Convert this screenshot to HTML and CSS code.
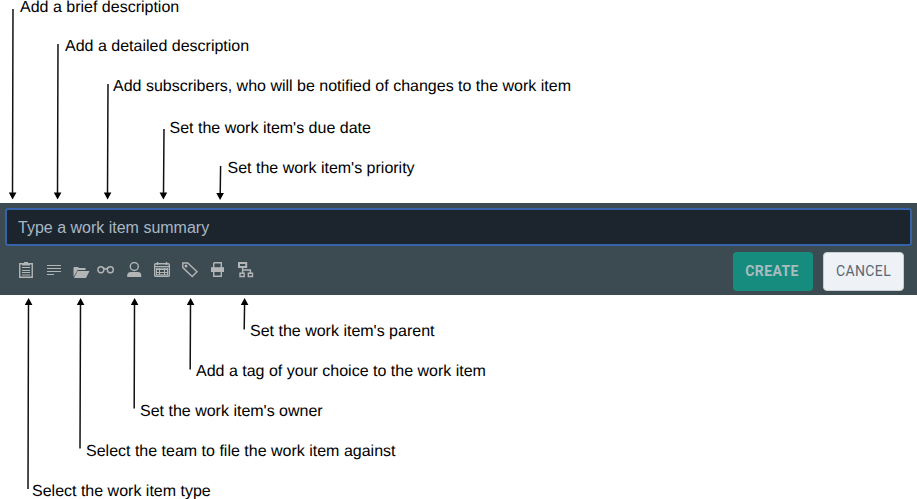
FILE: index.html
```
<!DOCTYPE html>
<html lang="en">
<head>
<meta charset="utf-8">
<title>Work item quick create</title>
<link rel="stylesheet" href="styles.css">
</head>
<body>
<svg class="notes" width="917" height="203" viewBox="0 0 917 203">
  <path class="shaft" d="M13 9L12.500 194M58 44L57.500 194M108 84L107.500 194M164 129L163.500 194M220.600 166L220.200 194"/>
  <path d="M8.800 192.500h7.600L12.600 199.500zM53.800 192.500h7.600L57.600 199.500zM103.800 192.500h7.600L107.600 199.500zM159.600 192.500h7.600L163.400 199.500zM216.300 193h7.600L220.100 200z"/>
  <text x="20" y="12">Add a brief description</text>
  <text x="65" y="51">Add a detailed description</text>
  <text x="113" y="91">Add subscribers, who will be notified of changes to the work item</text>
  <text x="169.500" y="133">Set the work item's due date</text>
  <text x="227.500" y="173">Set the work item's priority</text>
</svg>
<form class="bar">
  <input class="summary" type="text" placeholder="Type a work item summary" aria-label="Summary">
  <div class="tools">
    <div class="icons">
      <svg class="icon" viewBox="0 0 28 16"><path class="line" d="M7.750 1.750h12.500v13.500H7.750z"/><path d="M10 1h2V0h4v1h2v2.500h-8z"/><path class="thin" d="M10 5.500h8M10 8.500h8M10 10.500h8M10 13h8"/></svg>
      <svg class="icon" viewBox="0 0 28 16"><path class="thin" d="M7 3.500h14M7 6.500h14M7 9.500h14M7 12.500h7"/></svg>
      <svg class="icon" viewBox="0 0 28 16"><path d="M5.500 6L6 5h4l1 1h6.500v2H9.500L6 14.500h-.5zM9.500 9h12L18 16H6z"/></svg>
      <svg class="icon" viewBox="0 0 28 16"><circle class="line" cx="4.900" cy="7.700" r="3"/><circle class="line" cx="14.300" cy="7.700" r="3"/><path class="line" d="M6.500 5.500L9.600 7.200L12.500 5.500"/></svg>
      <svg class="icon" viewBox="0 0 28 16"><circle class="line" cx="10.300" cy="4.500" r="4"/><path d="M3.200 15v-1.500c0-2 1.200-3.500 3.500-3.500h7.400c2 0 3.200 1.500 3.200 3.500V15z"/></svg>
      <svg class="icon" viewBox="0 0 28 16"><rect class="line" x="2.700" y="1.700" width="14.600" height="12.600" rx="1"/><path class="thin" d="M3 4.500h14M4 7.500h12M4 10.500h12M7.500 6v7M12.500 6v7M4.500 6v7M15.500 6v7M4 6.200h12M4 12.800h12"/><path class="line" d="M5.500 0v3M14.500 0v3"/></svg>
      <svg class="icon" viewBox="0 0 28 16"><path class="line" d="M2.800 1h5L17 9.700 12.200 14.500 2.800 5.600z"/><circle cx="6" cy="3.900" r="1.500"/></svg>
      <svg class="icon" viewBox="0 0 28 16"><path class="line" d="M5.700.7h7.600V6M5.700 6V.7M5.700 9v5.300h7.600V9"/><path d="M3 5.200h13v4.800H3z"/></svg>
      <svg class="icon" viewBox="0 0 28 16"><path class="line strong" d="M3 1h7.200v4H3z"/><path class="line" d="M6.600 5v3h7.800v3M6.600 8v3M4 11.300h4.200v3.200H4zM12.300 11.300h4.200v3.200h-4.200z"/></svg>
    </div>
    <button class="button create" type="button">CREATE</button>
    <button class="button cancel" type="button">CANCEL</button>
  </div>
</form>
<svg class="notes" width="917" height="204" viewBox="0 295 917 204">
  <path class="shaft" d="M28.500 303L28 489M80.500 303L80 448.500M134.500 303L134.200 408.500M190.500 303L190.200 369.500M244.600 303L244.200 329.500"/>
  <path d="M24.800 305h7.600L28.600 298zM76.800 305h7.600L80.600 298zM130.800 305h7.600L134.600 298zM186.800 305h7.600L190.600 298zM240.800 305h7.600L244.600 298z"/>
  <text x="250" y="336">Set the work item's parent</text>
  <text x="196" y="376">Add a tag of your choice to the work item</text>
  <text x="140" y="416">Set the work item's owner</text>
  <text x="86" y="456">Select the team to file the work item against</text>
  <text x="32" y="496">Select the work item type</text>
</svg>
</body>
</html>
```
FILE: styles.css
```
body {
  margin: 0;
  background: #fff;
  font-family: "Liberation Sans", Arial, sans-serif;
  overflow: hidden;
}

.notes {
  display: block;
  fill: #000;
}

.notes text {
  font-size: 16px;
  text-rendering: geometricPrecision;
}

.shaft {
  fill: none;
  stroke: #111;
  stroke-width: 1.5;
}

.bar {
  box-sizing: border-box;
  height: 92px;
  padding: 5px 5px 0;
  background: #3c4a52;
}

.summary {
  display: block;
  box-sizing: border-box;
  width: 907px;
  height: 38px;
  margin: 0;
  padding: 2px 11px 0;
  border: 2px solid #3662a8;
  border-radius: 3px;
  background: #1c252d;
  color: #a9b7c4;
  font: 16px "Liberation Sans", Arial, sans-serif;
  outline: none;
}

.summary::placeholder {
  color: #a9b7c4;
  opacity: 1;
}

.tools {
  display: flex;
  gap: 10px;
  padding: 6px 8px 0 7px;
}

.icons {
  display: flex;
  flex: 1;
  padding-top: 10px;
}

.icon {
  width: 28px;
  height: 16px;
  fill: #b3b5b6;
}

.line,
.thin {
  fill: none;
  stroke: #b3b5b6;
  stroke-width: 1.4;
}

.thin {
  stroke-width: 1;
}

.strong {
  stroke-width: 2;
}

.button {
  box-sizing: border-box;
  height: 39px;
  padding: 0 0 1px;
  border: 0;
  border-radius: 4px;
  font: 14px Roboto, sans-serif;
  letter-spacing: 0.4px;
}

.create {
  width: 80px;
  padding-right: 2px;
  background: #168c7e;
  color: #a9bcc0;
  font-weight: 700;
}

.cancel {
  width: 81px;
  border: 1px solid #c8cdd0;
  background: #eef1f5;
  color: #596775;
}
```
